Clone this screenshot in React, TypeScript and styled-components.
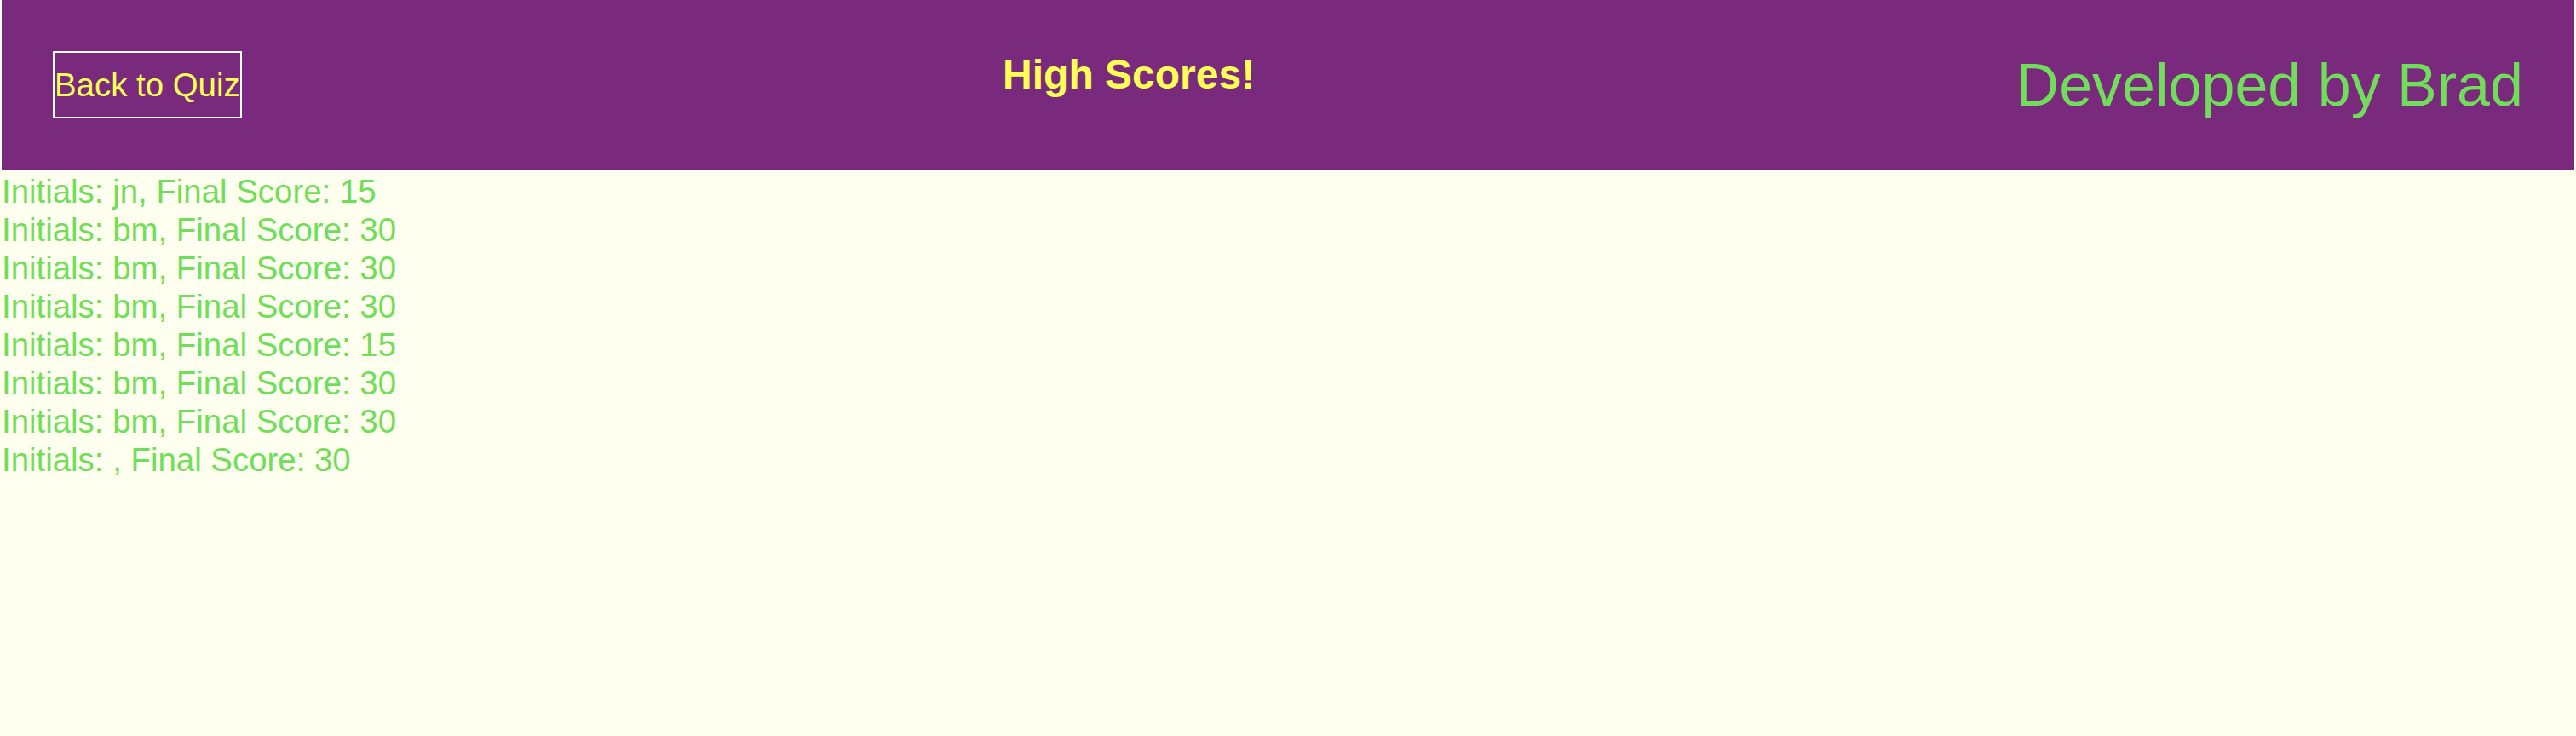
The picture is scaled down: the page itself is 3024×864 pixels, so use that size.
import React from 'react';
import styled, { createGlobalStyle } from 'styled-components';

/**
 *
 *  STYLE
 */
const GlobalStyle = createGlobalStyle`
  html,
  body {
    margin: 0;
    background-color: #fffff0;
    font-family: "Liberation Sans", Arial, Helvetica, sans-serif;
  }
`;

const Page = styled.div`
  display: flex;
  flex-direction: column;
  min-height: 864px;
  padding: 0 2px;
  box-sizing: border-box;
`;

const Header = styled.header`
  display: flex;
  justify-content: space-between;
  align-items: flex-start;
  padding: 60px;
  background-color: #7a2a7d;
`;

const BackBtn = styled.button`
  height: 79px;
  padding: 0;
  border: 2px solid #ffffff;
  border-radius: 0;
  background: transparent;
  color: #ffff55;
  font-family: inherit;
  font-size: 38.4px;
  cursor: pointer;
`;

const Title = styled.h2`
  margin: 0;
  color: #ffff55;
  font-size: 48px;
  font-weight: bold;
  line-height: 55px;
`;

const Credit = styled.h1`
  margin: 0;
  color: #70de5a;
  font-size: 70px;
  font-weight: normal;
  line-height: 80px;
`;

const ScoreList = styled.ul`
  list-style: none;
  margin: 0;
  padding: 2px 0 0;
`;

const ScoreRow = styled.li`
  color: #70de5a;
  font-size: 38.4px;
  line-height: 45px;
`;

/**
 *
 *  DATA
 */
const scores = [
  { initials: 'jn', score: 15 },
  { initials: 'bm', score: 30 },
  { initials: 'bm', score: 30 },
  { initials: 'bm', score: 30 },
  { initials: 'bm', score: 15 },
  { initials: 'bm', score: 30 },
  { initials: 'bm', score: 30 },
  { initials: '', score: 30 },
];

/**
 *
 *  FUNCTIONAL COMPONENT
 */
export default function App() {
  return (
    <>
      <GlobalStyle />
      <Page>
        <Header>
          <BackBtn>Back to Quiz</BackBtn>
          <Title>High Scores!</Title>
          <Credit>Developed by Brad</Credit>
        </Header>
        <ScoreList>
          {scores.map((s, i) => (
            <ScoreRow key={i}>
              Initials: {s.initials}, Final Score: {s.score}
            </ScoreRow>
          ))}
        </ScoreList>
      </Page>
    </>
  );
}
